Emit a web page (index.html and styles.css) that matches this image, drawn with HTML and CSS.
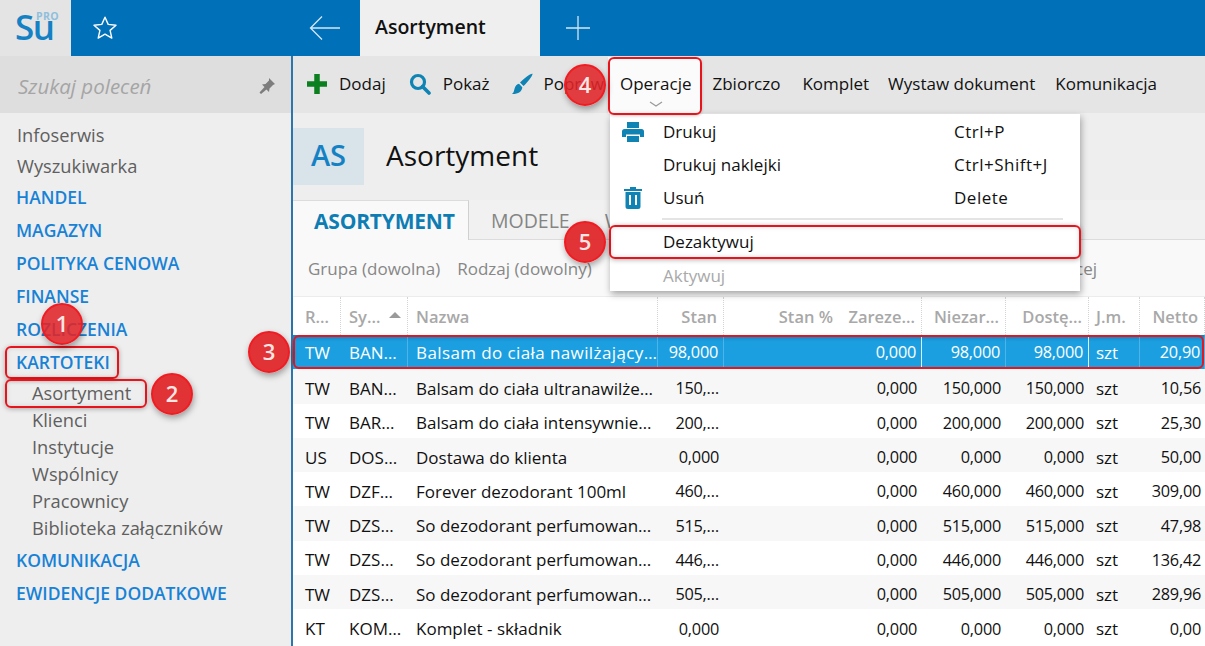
FILE: index.html
```html
<!DOCTYPE html>
<html lang="pl">
<head>
<meta charset="utf-8">
<title>Asortyment</title>
<link rel="stylesheet" href="styles.css">
</head>
<body>
<div class="app">
  <header class="topbar">
    <div class="logo"><span class="logo-su">Su</span><span class="logo-pro">PRO</span></div>
    <div class="fav">
      <svg class="star" viewBox="0 0 26 26" width="26" height="26"><path d="M13 2.2l3.2 7.2 7.8.8-5.900 5.200 1.700 7.700L13 19.100l-6.800 4 1.700-7.700L2 10.200l7.800-.8z" fill="none" stroke="#fff" stroke-width="1.400" stroke-linejoin="round"/></svg>
      <svg class="back" viewBox="0 0 32 26" width="32" height="26"><path d="M31 13H1.500M13 1.500L1.500 13 13 24.500" fill="none" stroke="#d5e6f2" stroke-width="1.300"/></svg>
    </div>
    <div class="doc-tab">Asortyment</div>
    <div class="add-tab">
      <svg viewBox="0 0 26 26" width="26" height="26"><path d="M13 1v24M1 13h24" fill="none" stroke="#d5e6f2" stroke-width="1.300"/></svg>
    </div>
  </header>
  <div class="body">
    <aside class="sidebar">
      <div class="search">
        <span class="search-text">Szukaj poleceń</span>
        <svg class="pin" viewBox="0 0 18 18" width="18" height="18"><path d="M11 1l6 6-2 1-3.500 3.500-.5 3.500-2.500-2.500L3 17l-1.500-1.500L6.500 10 4 7.500l3.500-.5L11 3.500z" fill="#7d7d7d"/></svg>
      </div>
      <nav class="nav">
        <a class="nav-top">Infoserwis</a>
        <a class="nav-top">Wyszukiwarka</a>
        <a class="nav-sec">HANDEL</a>
        <a class="nav-sec">MAGAZYN</a>
        <a class="nav-sec">POLITYKA CENOWA</a>
        <a class="nav-sec">FINANSE</a>
        <a class="nav-sec">ROZLICZENIA</a>
        <a class="nav-sec">KARTOTEKI</a>
        <a class="nav-sub">Asortyment</a>
        <a class="nav-sub">Klienci</a>
        <a class="nav-sub">Instytucje</a>
        <a class="nav-sub">Wspólnicy</a>
        <a class="nav-sub">Pracownicy</a>
        <a class="nav-sub">Biblioteka załączników</a>
        <a class="nav-sec">KOMUNIKACJA</a>
        <a class="nav-sec">EWIDENCJE DODATKOWE</a>
      </nav>
    </aside>
    <main class="main">
      <div class="toolbar">
        <span class="tool t-dodaj"><svg viewBox="0 0 20 20" width="20" height="20"><path d="M10 0v20M0 10h20" stroke="#0c7f1f" stroke-width="5.500" fill="none"/></svg>Dodaj</span>
        <span class="tool t-pokaz"><svg viewBox="0 0 22 22" width="22" height="22"><circle cx="9" cy="9" r="6.500" fill="none" stroke="#1083b5" stroke-width="3.200"/><path d="M13.500 13.500L20 20" stroke="#1083b5" stroke-width="3.600" stroke-linecap="round"/></svg>Pokaż</span>
        <span class="tool t-popraw"><svg viewBox="0 0 22 22" width="22" height="22"><path d="M21.500.8c.7 1-5 9-9 12.200L9 9.600C12.500 5.500 20.500-.2 21.500.8zM8 10.800l3.300 3.400c-.3 4.300-4 7-10.500 6.800 2.200-1.400 2-3 2.800-5.500.7-2.500 2.300-4.300 4.400-4.700z" fill="#1083b5"/></svg>Popraw</span>
        <span class="tool t-oper">Operacje<svg class="chev" viewBox="0 0 14 6" width="14" height="6"><path d="M1 1l6 4 6-4" fill="none" stroke="#9a9a9a" stroke-width="1.200"/></svg></span>
        <span class="tool t-zb">Zbiorczo</span>
        <span class="tool t-ko">Komplet</span>
        <span class="tool t-wy">Wystaw dokument</span>
        <span class="tool t-kom">Komunikacja</span>
      </div>
      <div class="title-row">
        <div class="badge">AS</div>
        <h1 class="title">Asortyment</h1>
      </div>
      <div class="tabs">
        <div class="tab active">ASORTYMENT</div>
        <div class="tab">MODELE</div>
        <div class="tab tab-third">WARIANTY</div>
      </div>
      <div class="filters">
        <span class="filter">Grupa (dowolna)</span>
        <span class="filter">Rodzaj (dowolny)</span>
        <span class="filter last">Więcej</span>
      </div>
      <div class="table">
        <div class="row head">
          <span class="c">R…</span><span class="c">Sy…<i class="sort"></i></span><span class="c">Nazwa</span><span class="c r">Stan</span><span class="c r nb">Stan %</span><span class="c r">Zareze…</span><span class="c r">Niezar…</span><span class="c r">Dostę…</span><span class="c">J.m.</span><span class="c r">Netto</span>
        </div>
        <div class="row sel">
          <span class="c">TW</span><span class="c">BAN…</span><span class="c">Balsam do ciała nawilżający…</span><span class="c r">98,000</span><span class="c r nb"></span><span class="c r wb">0,000</span><span class="c r">98,000</span><span class="c r wb">98,000</span><span class="c">szt</span><span class="c r">20,90</span>
        </div>
        <div class="row alt">
          <span class="c">TW</span><span class="c">BAN…</span><span class="c">Balsam do ciała ultranawilże…</span><span class="c r">150,…</span><span class="c r"></span><span class="c r">0,000</span><span class="c r">150,000</span><span class="c r">150,000</span><span class="c">szt</span><span class="c r">10,56</span>
        </div>
        <div class="row">
          <span class="c">TW</span><span class="c">BAR…</span><span class="c">Balsam do ciała intensywnie…</span><span class="c r">200,…</span><span class="c r"></span><span class="c r">0,000</span><span class="c r">200,000</span><span class="c r">200,000</span><span class="c">szt</span><span class="c r">25,30</span>
        </div>
        <div class="row alt">
          <span class="c">US</span><span class="c">DOS…</span><span class="c">Dostawa do klienta</span><span class="c r">0,000</span><span class="c r"></span><span class="c r">0,000</span><span class="c r">0,000</span><span class="c r">0,000</span><span class="c">szt</span><span class="c r">50,00</span>
        </div>
        <div class="row">
          <span class="c">TW</span><span class="c">DZF…</span><span class="c">Forever dezodorant 100ml</span><span class="c r">460,…</span><span class="c r"></span><span class="c r">0,000</span><span class="c r">460,000</span><span class="c r">460,000</span><span class="c">szt</span><span class="c r">309,00</span>
        </div>
        <div class="row alt">
          <span class="c">TW</span><span class="c">DZS…</span><span class="c">So dezodorant perfumowan…</span><span class="c r">515,…</span><span class="c r"></span><span class="c r">0,000</span><span class="c r">515,000</span><span class="c r">515,000</span><span class="c">szt</span><span class="c r">47,98</span>
        </div>
        <div class="row">
          <span class="c">TW</span><span class="c">DZS…</span><span class="c">So dezodorant perfumowan…</span><span class="c r">446,…</span><span class="c r"></span><span class="c r">0,000</span><span class="c r">446,000</span><span class="c r">446,000</span><span class="c">szt</span><span class="c r">136,42</span>
        </div>
        <div class="row alt">
          <span class="c">TW</span><span class="c">DZS…</span><span class="c">So dezodorant perfumowan…</span><span class="c r">505,…</span><span class="c r"></span><span class="c r">0,000</span><span class="c r">505,000</span><span class="c r">505,000</span><span class="c">szt</span><span class="c r">289,96</span>
        </div>
        <div class="row">
          <span class="c">KT</span><span class="c">KOM…</span><span class="c">Komplet - składnik</span><span class="c r">0,000</span><span class="c r"></span><span class="c r">0,000</span><span class="c r">0,000</span><span class="c r">0,000</span><span class="c">szt</span><span class="c r">0,00</span>
        </div>
      </div>
    </main>
  </div>

  <div class="menu">
    <div class="mi"><svg class="mi-ic" viewBox="0 0 22 22" width="22" height="22"><path d="M5 1h12v6H5zM2.500 8h17A2.500 2.500 0 0 1 22 10.500V16h-4v-2.500H4V16H0v-5.500A2.500 2.500 0 0 1 2.500 8zM5 15h12v6H5z" fill="#1083b5"/></svg><span class="mi-l">Drukuj</span><span class="mi-k">Ctrl+P</span></div>
    <div class="mi"><span class="mi-l">Drukuj naklejki</span><span class="mi-k">Ctrl+Shift+J</span></div>
    <div class="mi"><svg class="mi-ic trash" viewBox="0 0 18 22" width="18" height="22"><path d="M6 0h6v2h6v2H0V2h6zM1.500 5h15v14.500A2.500 2.500 0 0 1 14 22H4a2.500 2.500 0 0 1-2.500-2.500zM5 8v10h2V8zm6 0v10h2V8z" fill="#1083b5" fill-rule="evenodd"/></svg><span class="mi-l">Usuń</span><span class="mi-k">Delete</span></div>
    <div class="mi-sep"></div>
    <div class="mi tall"><span class="mi-l">Dezaktywuj</span></div>
    <div class="mi off"><span class="mi-l">Aktywuj</span></div>
  </div>

  <div class="mark m-kart"></div>
  <div class="mark m-aso"></div>
  <div class="mark m-row"></div>
  <div class="mark m-oper"></div>
  <div class="mark m-dez"></div>
  <div class="dot d1">1</div>
  <div class="dot d2">2</div>
  <div class="dot d3">3</div>
  <div class="dot d4">4</div>
  <div class="dot d5">5</div>
</div>
</body>
</html>
```

FILE: styles.css
```css
* { box-sizing: border-box; }
html, body { margin: 0; padding: 0; height: 100%; overflow: hidden; }
body { font-family: "Open Sans", "Noto Sans", sans-serif; font-size: 16px; color: #111; background: #eee; }
.app { position: relative; width: 1205px; height: 646px; overflow: hidden; display: flex; flex-direction: column; }

.topbar { display: flex; height: 56px; flex: none; background: #0070b8; }
.logo { position: relative; width: 71px; background: #e4e4e4; }
.logo-su { position: absolute; left: 15px; top: 2px; font-size: 35px; line-height: 50px; font-weight: 600; color: #1481c4; letter-spacing: -1.500px; }
.logo-pro { position: absolute; left: 36px; top: 10px; font-size: 10.500px; line-height: 12px; font-weight: 700; color: #8fbfdd; letter-spacing: .4px; }
.fav { width: 289px; display: flex; align-items: center; justify-content: space-between; padding: 0 19px 0 21px; }
.star { flex: none; }
.back { flex: none; }
.doc-tab { width: 180px; background: #efefef; padding-left: 15px; font-size: 19.500px; font-weight: 600; line-height: 54px; }
.add-tab { flex: 1; display: flex; align-items: center; padding-left: 25px; }

.body { flex: 1; display: flex; min-height: 0; }
.sidebar { width: 293px; flex: none; background: #eee; border-right: 2px solid #2a76ad; display: flex; flex-direction: column; }
.search { height: 57px; background: #dedede; display: flex; align-items: center; justify-content: space-between; padding: 3px 15px 0 18px; }
.search-text { font-style: italic; font-size: 20.500px; color: #a5a5a5; }
.pin { flex: none; }
.nav { display: flex; flex-direction: column; padding-top: 7px; }
.nav a { display: block; white-space: nowrap; }
.nav-top { height: 31px; line-height: 29px; padding-left: 17px; font-size: 18.300px; color: #5f5f5f; }
.nav-sec { height: 33px; line-height: 31px; padding-left: 16px; font-size: 17.500px; font-weight: 600; color: #1782d6; }
.nav-sub { height: 27px; line-height: 25px; padding-left: 32px; font-size: 18.300px; color: #5f5f5f; }
.nav-sub + .nav-sec { margin-top: 3px; }

.main { flex: 1; min-width: 0; display: flex; flex-direction: column; background: #eee; }
.toolbar { isolation: isolate; height: 57px; flex: none; background: #e5e5e5; display: flex; align-items: center; padding-bottom: 2px; font-size: 17px; white-space: nowrap; }
.tool { display: flex; align-items: center; color: #111; }
.tool svg { flex: none; }
.t-dodaj { margin-left: 14px; gap: 12px; }
.t-pokaz { margin-left: 23px; gap: 12px; }
.t-popraw { margin-left: 21px; gap: 11px; }
.t-oper { position: relative; z-index: 1; margin-left: 16px; }
.t-oper::before { content: ""; position: absolute; left: -12px; top: -15px; width: 92px; height: 57px; background: #fbfbfb; z-index: -1; }
.chev { position: absolute; left: 29px; top: 29px; }
.t-zb { margin-left: 21px; }
.t-ko { margin-left: 22px; }
.t-wy { margin-left: 19px; }
.t-kom { margin-left: 20px; }

.title-row { height: 87px; flex: none; display: flex; align-items: center; padding-bottom: 1px; }
.badge { width: 71px; height: 57px; background: #d8e3ea; color: #1481c4; font-size: 29px; font-weight: 600; line-height: 54px; text-align: center; }
.title { margin: 0 0 3px 22px; font-size: 28px; font-weight: 400; color: #111; }

.tabs { height: 40px; flex: none; display: flex; background: #f1f1f1; border-bottom: 1px solid #dcdcdc; }
.tab { padding: 0 22px; line-height: 42px; font-size: 19.500px; color: #858585; white-space: nowrap; }
.tab-third { padding-left: 13px; }
.tab.active { width: 176px; padding: 0 0 0 21px; background: #f9f9f9; border-top: 1px solid #dcdcdc; border-right: 1px solid #d0d0d0; margin-bottom: -1px; color: #0d7db4; font-size: 21px; font-weight: 700; line-height: 40px; letter-spacing: -.2px; }

.filters { height: 57px; flex: none; display: flex; align-items: center; background: #f9f9f9; border-bottom: 1px solid #ececec; padding: 0 0 0 15px; font-size: 17px; color: #878787; white-space: nowrap; }
.filter { margin-right: 17px; }
.filter.last { margin-left: auto; margin-right: 108px; }

.table { flex: 1; min-height: 0; background: #fff; }
.row { display: grid; grid-template-columns: 48px 67px 250px 66px 114px 84px 84px 83px 51px 65px; height: 34.300px; align-items: center; font-size: 17px; white-space: nowrap; }
.row.alt { background: #f7f7f7; }
.row.head { height: 38px; background: #fff; color: #a8a8a8; font-weight: 600; font-size: 16.500px; box-shadow: 0 2px 3px rgba(0,0,0,.07); position: relative; }
.c { display: flex; align-items: center; height: 100%; padding: 4px 5px 0 8px; overflow: hidden; }
.c:first-child { padding-left: 12px; }
.c:nth-child(9) { padding-left: 7px; }
.c.r { justify-content: flex-end; padding-left: 0; font-size: 16.300px; letter-spacing: -.25px; }
.c:last-child { padding-right: 4px; }
.head .c { padding-top: 0; border-right: 1px dotted #d4d4d4; }
.head .c.r { font-size: 16.500px; letter-spacing: 0; padding-right: 6px; }
.head .c.nb { border-right: 0; padding-right: 5px; }
.sort { display: inline-block; width: 0; height: 0; margin-left: 9px; margin-top: -3px; border-left: 6px solid transparent; border-right: 6px solid transparent; border-bottom: 6px solid #9a9a9a; }
.row.sel { background: linear-gradient(#1286c9 0, #1c9fe0 7px, #1c9fe0 100%); color: #fff; }
.sel .c { padding-top: 0; border-right: 1px solid rgba(255,255,255,.22); }
.sel .c:nth-child(3) { padding-right: 0; letter-spacing: .4px; }
.sel .c.nb { border-right: 0; }
.sel .c.wb { border-right: 1px solid rgba(255,255,255,.85); }
.sel .c:first-child { border-right: 0; }

.menu { position: absolute; left: 610px; top: 114px; width: 470px; height: 177px; background: #fff; padding-top: 2px; box-shadow: 1px 3px 7px rgba(0,0,0,.35); font-size: 17px; }
.mi { position: relative; height: 33px; line-height: 32px; }
.mi.tall { height: 34px; }
.mi-l { position: absolute; left: 53px; top: 0; white-space: nowrap; }
.mi-k { position: absolute; left: 344px; top: 0; white-space: nowrap; letter-spacing: .5px; }
.mi-ic { position: absolute; left: 12px; top: 5px; }
.mi-ic.trash { left: 14px; top: 5px; }
.mi-sep { height: 2px; margin: 3px 17px 6px 52px; background: #e4e4e4; }
.mi.off { color: #a9a9a9; }

.mark { position: absolute; border: 2px solid #e8141c; border-radius: 6px; box-shadow: 0 1px 5px rgba(0,0,0,.3), inset 0 0 5px rgba(0,0,0,.12); }
.m-kart { left: 5px; top: 346px; width: 114px; height: 33px; }
.m-aso { left: 5px; top: 379px; width: 142px; height: 29px; }
.m-row { left: 293px; top: 335px; width: 911px; height: 34px; box-shadow: none; }
.m-oper { left: 608px; top: 57px; width: 94px; height: 58px; box-shadow: 0 1px 3px rgba(0,0,0,.2); }
.m-dez { left: 609px; top: 225px; width: 472px; height: 34px; }

.dot { position: absolute; width: 42px; height: 42px; margin: -21px 0 0 -21px; border-radius: 50%; background: rgba(224,36,40,.93); border: 2px solid #f01c22; box-shadow: 1px 3px 6px rgba(0,0,0,.35); color: #fbe6e4; font-size: 22px; font-weight: 600; line-height: 37px; text-align: center; }
.d1 { left: 62px; top: 324px; background: rgba(224,36,40,.88); }
.d2 { left: 172px; top: 394px; }
.d3 { left: 269px; top: 352px; }
.d4 { left: 585px; top: 85px; background: rgba(224,36,40,.88); }
.d5 { left: 585px; top: 242px; }
```
